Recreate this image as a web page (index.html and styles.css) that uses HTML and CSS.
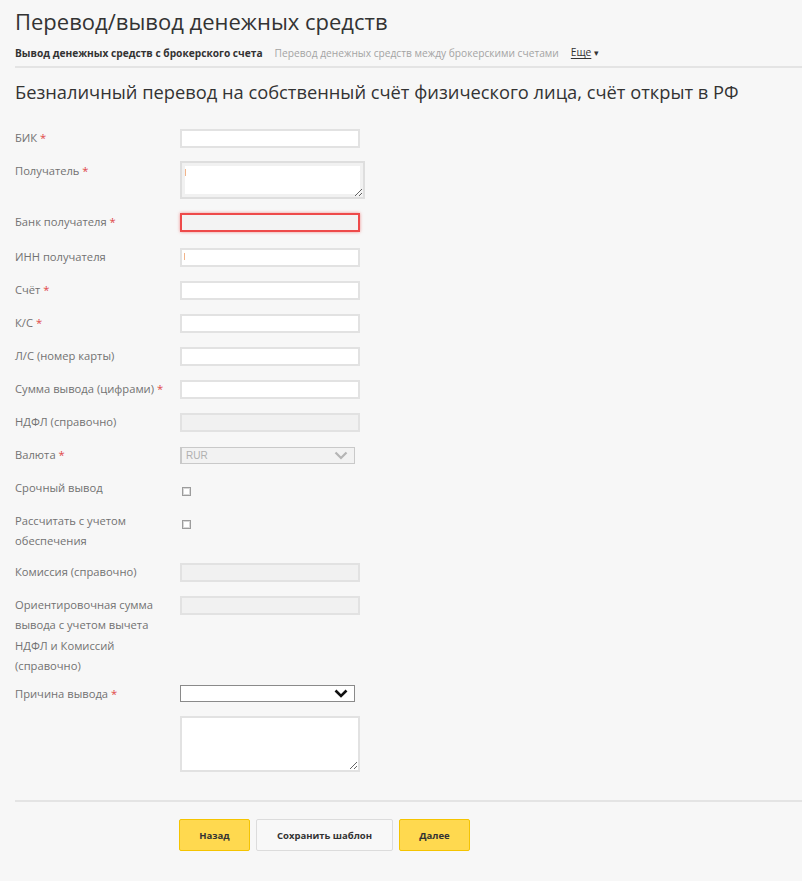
FILE: index.html
```html
<!DOCTYPE html>
<html lang="ru">
<head>
<meta charset="utf-8">
<link rel="stylesheet" href="styles.css">
</head>
<body>
<div class="page">
  <h1 class="title">Перевод/вывод денежных средств</h1>
  <nav class="subnav">
    <span class="tab active">Вывод денежных средств с брокерского счета</span>
    <span class="tab">Перевод денежных средств между брокерскими счетами</span>
    <span class="more"><u>Еще</u> <span class="caret">▾</span></span>
  </nav>
  <div class="divider"></div>
  <h2 class="subtitle">Безналичный перевод на собственный счёт физического лица, счёт открыт в РФ</h2>

  <form class="form">
    <div class="row">
      <label class="lbl">БИК <span class="req">*</span></label>
      <div class="ctl"><input class="inp" type="text"></div>
    </div>
    <div class="row">
      <label class="lbl">Получатель <span class="req">*</span></label>
      <div class="ctl ctl-top"><textarea class="area area-sm"></textarea><span class="mark mark-area"></span></div>
    </div>
    <div class="row row-err">
      <label class="lbl">Банк получателя <span class="req">*</span></label>
      <div class="ctl"><input class="inp inp-err" type="text"></div>
    </div>
    <div class="row">
      <label class="lbl">ИНН получателя</label>
      <div class="ctl"><input class="inp" type="text"><span class="mark"></span></div>
    </div>
    <div class="row">
      <label class="lbl">Счёт <span class="req">*</span></label>
      <div class="ctl"><input class="inp" type="text"></div>
    </div>
    <div class="row">
      <label class="lbl">К/С <span class="req">*</span></label>
      <div class="ctl"><input class="inp" type="text"></div>
    </div>
    <div class="row">
      <label class="lbl">Л/С (номер карты)</label>
      <div class="ctl"><input class="inp" type="text"></div>
    </div>
    <div class="row">
      <label class="lbl">Сумма вывода (цифрами) <span class="req">*</span></label>
      <div class="ctl"><input class="inp" type="text"></div>
    </div>
    <div class="row">
      <label class="lbl">НДФЛ (справочно)</label>
      <div class="ctl"><input class="inp inp-dis" type="text" disabled></div>
    </div>
    <div class="row">
      <label class="lbl">Валюта <span class="req">*</span></label>
      <div class="ctl">
        <div class="sel sel-dis">
          <span class="sel-val">RUR</span>
          <svg class="chev" width="14" height="9" viewBox="0 0 14 9"><path d="M1.5 1.5 L7 7 L12.5 1.5" fill="none" stroke="#b5b5b5" stroke-width="2.2"/></svg>
        </div>
      </div>
    </div>
    <div class="row">
      <label class="lbl">Срочный вывод</label>
      <div class="ctl ctl-top"><span class="chk"></span></div>
    </div>
    <div class="row row-chk2">
      <label class="lbl">Рассчитать с учетом обеспечения</label>
      <div class="ctl ctl-top"><span class="chk"></span></div>
    </div>
    <div class="row">
      <label class="lbl">Комиссия (справочно)</label>
      <div class="ctl"><input class="inp inp-dis" type="text" disabled></div>
    </div>
    <div class="row row-long">
      <label class="lbl">Ориентировочная сумма вывода с учетом вычета НДФЛ и Комиссий (справочно)</label>
      <div class="ctl ctl-top"><input class="inp inp-dis inp-top" type="text" disabled></div>
    </div>
    <div class="row row-reason">
      <label class="lbl">Причина вывода <span class="req">*</span></label>
      <div class="ctl">
        <div class="sel">
          <span class="sel-val"></span>
          <svg class="chev" width="14" height="9" viewBox="0 0 14 9"><path d="M1.5 1.5 L7 7 L12.5 1.5" fill="none" stroke="#111" stroke-width="2.6"/></svg>
        </div>
      </div>
    </div>
    <div class="row row-last">
      <span class="lbl"></span>
      <div class="ctl ctl-top"><textarea class="area area-lg"></textarea></div>
    </div>
  </form>

  <div class="divider divider-bottom"></div>

  <div class="actions">
    <button class="btn btn-yellow btn-sm" type="button">Назад</button>
    <button class="btn btn-light" type="button">Сохранить шаблон</button>
    <button class="btn btn-yellow btn-sm" type="button">Далее</button>
  </div>
</div>
</body>
</html>
```
FILE: styles.css
```css
html, body {
  margin: 0;
  padding: 0;
  background: #f7f7f7;
}
body {
  font-family: "Open Sans", "DejaVu Sans", sans-serif;
  color: #333;
}
.page {
  padding-left: 15px;
  padding-bottom: 20px;
}
.title {
  margin: 6px 0 0 0;
  font-size: 22px;
  line-height: 30px;
  font-weight: 400;
  color: #333;
}
.subnav {
  margin-top: 9px;
  font-size: 10.2px;
  line-height: 14px;
  display: flex;
  align-items: center;
  white-space: nowrap;
}
.tab {
  color: #a4a4a4;
  margin-right: 12px;
}
.tab.active {
  color: #333;
  font-weight: 700;
}
.more {
  color: #333;
  margin-left: 0;
}
.more u {
  text-decoration-thickness: 1px;
  text-underline-offset: 2px;
}
.caret {
  font-size: 9px;
}
.divider {
  margin-top: 6px;
  height: 2px;
  background: #e4e4e4;
}
.subtitle {
  margin: 11px 0 0 0;
  font-size: 18.3px;
  line-height: 26px;
  font-weight: 400;
  color: #333;
}
.form {
  margin-top: 23px;
}
.row {
  display: grid;
  grid-template-columns: 166px 1fr;
  margin-bottom: 13px;
}
.lbl {
  font-size: 11.2px;
  line-height: 20px;
  color: #727272;
  padding-right: 8px;
}
.req {
  color: #e04848;
}
.ctl {
  position: relative;
  display: flex;
  align-items: center;
  height: 20px;
}
.ctl-top {
  align-items: flex-start;
  height: auto;
}
.inp {
  box-sizing: border-box;
  width: 180px;
  height: 19px;
  margin: 0 0 0 -1px;
  padding: 0 4px;
  border: 2px solid #e2e2e2;
  background: #fff;
  font: inherit;
  outline: none;
}
.inp-dis {
  background: #f1f1f1;
}
.inp-top {
  margin-top: 1px;
}
.inp-err {
  height: 19px;
  background: #f3f3f3;
  border: 2px solid #ee4a4a;
  box-shadow: 0 0 3px rgba(235, 60, 60, 0.55);
}
.row-err {
  margin-bottom: 15px;
}
.mark {
  position: absolute;
  left: 3px;
  top: 6px;
  width: 1px;
  height: 7px;
  background: #f2b48a;
}
.mark-area {
  top: 8px;
  left: 4px;
}
.area {
  box-sizing: border-box;
  margin: 0 0 0 -1px;
  padding: 2px 4px;
  background: #fff;
  font: inherit;
  outline: none;
}
.area-sm {
  width: 185px;
  height: 38px;
  border: 2px solid #dedede;
  box-shadow: inset 0 0 0 3px #f1f1f1;
}
.area-lg {
  width: 180px;
  height: 56px;
  border: 2px solid #e2e2e2;
}
.sel {
  position: relative;
  box-sizing: border-box;
  width: 175px;
  height: 17px;
  margin-left: -1px;
  border: 1px solid #8a8a8a;
  background: #fff;
  display: flex;
  align-items: center;
  padding-left: 4px;
  font-family: "Liberation Sans", Arial, sans-serif;
  font-size: 10px;
}
.sel-dis {
  border: 1px solid #c9c9c9;
  border-left-width: 2px;
  background: #f2f2f2;
  color: #b0b0b0;
}
.chev {
  position: absolute;
  right: 6px;
  top: 3px;
}
.chk {
  display: block;
  box-sizing: border-box;
  width: 9px;
  height: 9px;
  margin: 9px 0 0 1px;
  border: 1px solid #9c9c9c;
  box-shadow: inset 0 0 0 1px #d8d8d8;
  background: #fff;
}
.row-chk2 {
  margin-bottom: 11px;
}
.row-long .lbl {
  line-height: 20.3px;
}
.row-long {
  margin-bottom: 8px;
}
.row-reason {
  margin-bottom: 12px;
}
.row-reason .ctl {
  align-items: flex-start;
}
.row-reason .sel {
  margin-top: 1px;
}
.row-last {
  margin-bottom: 0;
}
.divider-bottom {
  margin-top: 28px;
}
.actions {
  display: flex;
  gap: 6px;
  margin-top: 17px;
  padding-left: 164px;
}
.btn {
  box-sizing: border-box;
  height: 32px;
  font-family: "Open Sans", "DejaVu Sans", sans-serif;
  font-size: 9.5px;
  font-weight: 700;
  color: #333;
  border-radius: 2px;
  cursor: pointer;
}
.btn-sm {
  width: 71px;
}
.btn-yellow {
  background: #ffd94f;
  border: 1px solid #f5c400;
}
.btn-light {
  width: 137px;
  background: #f8f8f8;
  border: 1px solid #dcdcdc;
}
```
